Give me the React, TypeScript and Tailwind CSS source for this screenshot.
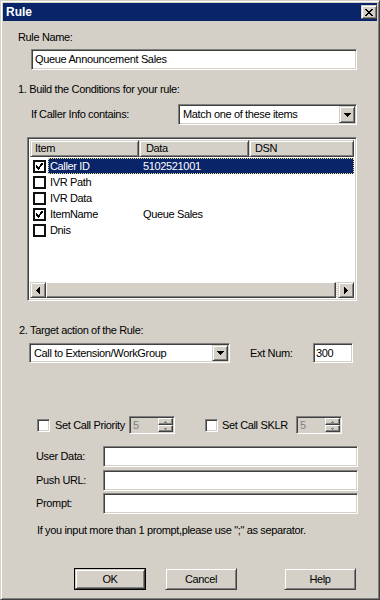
import React from "react";

const sunken =
  "border border-t-[#808080] border-l-[#808080] border-b-white border-r-white shadow-[inset_1px_1px_0_#404040,inset_-1px_-1px_0_#d4d0c8]";
const raised =
  "border border-t-[#d4d0c8] border-l-[#d4d0c8] border-b-[#404040] border-r-[#404040] shadow-[inset_1px_1px_0_#ffffff,inset_-1px_-1px_0_#808080]";
const raisedW =
  "border border-t-white border-l-white border-b-[#404040] border-r-[#404040] shadow-[inset_-1px_-1px_0_#808080]";

function Check() {
  return (
    <svg width="7" height="7" viewBox="0 0 7 7" shapeRendering="crispEdges">
      <path d="M0 2h1v1H0zM0 3h2v1H0zM0 4h3v1H0zM1 5h3v1H1zM2 6h1v1H2zM3 4h1v1H3zM4 3h1v1H4zM4 2h2v1H4zM5 1h1v1H5zM6 0h1v1H6zM5 0h1v1H5zM4 1h1v1H4zM3 3h1v1H3zM6 1h1v1H6zM5 2h1v1H5z" fill="#000" />
    </svg>
  );
}

function CheckBox({ checked, flat }: { checked?: boolean; flat?: boolean }) {
  return (
    <div
      className={`w-[13px] h-[13px] bg-white flex items-center justify-center box-border ${
        flat ? "border-2 border-[#101010]" : sunken
      }`}
    >
      {checked && <Check />}
    </div>
  );
}

function DownArrow() {
  return (
    <svg width="7" height="4" viewBox="0 0 7 4" shapeRendering="crispEdges">
      <path d="M0 0h7v1H0zM1 1h5v1H1zM2 2h3v1H2zM3 3h1v1H3z" fill="#000" />
    </svg>
  );
}

function Combo({ text, w }: { text: string; w: string }) {
  return (
    <div className={`${w} h-full bg-white box-border flex items-stretch p-[1px] ${sunken}`}>
      <div className="flex-1 flex items-center pl-[3px] text-black">{text}</div>
      <div className={`w-[16px] box-border flex items-center justify-center bg-[#d4d0c8] ${raised}`}>
        <DownArrow />
      </div>
    </div>
  );
}

function Spinner() {
  return (
    <div className={`w-[46px] h-[18px] box-border bg-[#d4d0c8] flex items-stretch p-[1px] ${sunken}`}>
      <div className="flex-1 flex items-center pl-[2px] text-[#808080]">5</div>
      <div className="w-[15px] flex flex-col">
        <div className={`flex-1 box-border flex items-center justify-center ${raisedW}`}>
          <svg width="3" height="2" viewBox="0 0 3 2"><path d="M1 0h1v1h1v1H0V1h1z" fill="#808080" /></svg>
        </div>
        <div className={`flex-1 box-border flex items-center justify-center ${raisedW}`}>
          <svg width="3" height="2" viewBox="0 0 3 2"><path d="M0 0h3v1H2v1H1V1H0z" fill="#808080" /></svg>
        </div>
      </div>
    </div>
  );
}

function Field({ label }: { label: string }) {
  return (
    <div className="flex items-center h-[21px]">
      <div className="ml-[33px] w-[67px]">{label}</div>
      <div className={`w-[255px] h-full bg-white box-border ${sunken}`} />
    </div>
  );
}

function Button({ label, def }: { label: string; def?: boolean }) {
  return (
    <div
      className={`w-[72px] h-[22px] box-border flex items-center justify-center ${
        def ? "border border-black p-0" : ""
      }`}
    >
      <div className={`w-full h-full box-border flex items-center justify-center ${raised}`}>{label}</div>
    </div>
  );
}

const rows = [
  { name: "Caller ID", data: "5102521001", checked: true, sel: true },
  { name: "IVR Path", data: "", checked: false },
  { name: "IVR Data", data: "", checked: false },
  { name: "ItemName", data: "Queue Sales", checked: true },
  { name: "Dnis", data: "", checked: false },
];

export default function App() {
  return (
    <div
      className="w-[380px] h-[600px] box-border bg-[#d4d0c8] border border-t-[#d4d0c8] border-l-[#d4d0c8] border-b-[#404040] border-r-[#404040] shadow-[inset_1px_1px_0_#ffffff,inset_-1px_-1px_0_#808080] p-[2px] flex flex-col text-[11px] leading-[13px] tracking-[-0.35px] text-black overflow-hidden"
      style={{ fontFamily: '"Liberation Sans", Arial, sans-serif' }}
    >
      {/* title bar */}
      <div className="h-[18px] bg-[#0a246a] flex items-start justify-between shrink-0">
        <div className="text-white font-bold text-[12px] leading-[18px] pl-[3px] tracking-[0px]">Rule</div>
        <div className={`mt-[2px] mr-[0px] w-[16px] h-[14px] box-border bg-[#d4d0c8] flex items-center justify-center ${raised}`}>
          <svg width="8" height="7" viewBox="0 0 8 7" shapeRendering="crispEdges">
            <path d="M0 0h2v1h1v1h2V1h1V0h2v1H7v1H6v1H5v1h1v1h1v1h1v1H6V6H5V5H3v1H2v1H0V6h1V5h1V4h1V3H2V2H1V1H0z" fill="#000" />
          </svg>
        </div>
      </div>

      {/* Rule name */}
      <div className="mt-[10px] ml-[15px]">Rule Name:</div>
      <div className={`mt-[5px] ml-[28px] w-[326px] h-[21px] bg-white box-border flex items-center pl-[3px] ${sunken}`}>
        Queue Announcement Sales
      </div>

      <div className="mt-[13px] ml-[15px]">1. Build the Conditions for your rule:</div>
      <div className="mt-[8px] h-[21px] flex items-center">
        <div className="ml-[28px] w-[147px]">If Caller Info contains:</div>
        <Combo text="Match one of these items" w="w-[179px]" />
      </div>

      {/* list view */}
      <div className={`mt-[12px] ml-[24px] w-[330px] h-[164px] box-border bg-white p-[2px] flex flex-col ${sunken}`}>
        <div className="h-[17px] flex shrink-0">
          <div className={`w-[109px] box-border bg-[#d4d0c8] pl-[4px] flex items-center ${raised}`}>Item</div>
          <div className={`w-[110px] box-border bg-[#d4d0c8] pl-[6px] flex items-center ${raised}`}>Data</div>
          <div className={`flex-1 box-border bg-[#d4d0c8] pl-[5px] flex items-center ${raised}`}>DSN</div>
        </div>
        <div className="flex-1 pt-[1px]">
          {rows.map((r) => (
            <div key={r.name} className="h-[16px] flex items-center">
              <div className="ml-[3px] mr-[2px]">
                <CheckBox checked={r.checked} flat />
              </div>
              <div
                className={`flex-1 h-full flex items-center box-border ${
                  r.sel ? "bg-[#0a246a] text-white border border-dotted border-[#e8d88a]" : "border border-transparent"
                }`}
              >
                <div className="w-[94px] pl-[1px]">{r.name}</div>
                <div>{r.data}</div>
              </div>
            </div>
          ))}
        </div>
        <div className="h-[16px] flex shrink-0 bg-[#ece9e4]">
          <div className={`w-[16px] box-border bg-[#d4d0c8] flex items-center justify-center ${raised}`}>
            <svg width="4" height="7" viewBox="0 0 4 7" shapeRendering="crispEdges"><path d="M3 0h1v7H3zM2 1h1v5H2zM1 2h1v3H1zM0 3h1v1H0z" fill="#000" /></svg>
          </div>
          <div className={`flex-1 box-border bg-[#d4d0c8] ${raisedW}`} />
          <div className="w-[2px] bg-[repeating-linear-gradient(0deg,#ffffff_0px,#ffffff_1px,#d4d0c8_1px,#d4d0c8_2px)]" />
          <div className={`w-[16px] box-border bg-[#d4d0c8] flex items-center justify-center ${raised}`}>
            <svg width="4" height="7" viewBox="0 0 4 7" shapeRendering="crispEdges"><path d="M0 0h1v7H0zM1 1h1v5H1zM2 2h1v3H2zM3 3h1v1H3z" fill="#000" /></svg>
          </div>
        </div>
      </div>

      <div className="mt-[23px] ml-[16px]">2. Target action of the Rule:</div>
      <div className="mt-[6px] h-[20px] flex items-center">
        <div className="ml-[26px] h-full">
          <Combo text="Call to Extension/WorkGroup" w="w-[201px]" />
        </div>
        <div className="ml-[20px] w-[63px]">Ext Num:</div>
        <div className={`w-[40px] h-full bg-white box-border flex items-center pl-[2px] ${sunken}`}>300</div>
      </div>

      {/* priority row */}
      <div className="mt-[53px] h-[18px] flex items-center">
        <div className="ml-[34px]">
          <CheckBox />
        </div>
        <div className="ml-[5px] w-[74px]">Set Call Priority</div>
        <Spinner />
        <div className="ml-[30px]">
          <CheckBox />
        </div>
        <div className="ml-[4px] w-[74px]">Set Call SKLR</div>
        <Spinner />
      </div>

      <div className="mt-[12px] flex flex-col gap-[2px]">
        <Field label="User Data:" />
        <div className="mt-[1px]">
          <Field label="Push URL:" />
        </div>
        <Field label="Prompt:" />
      </div>

      <div className="mt-[10px] ml-[34px]">If you input more than 1 prompt,please use ";" as separator.</div>

      <div className="mt-[31px] flex">
        <div className="ml-[71px]">
          <Button label="OK" def />
        </div>
        <div className="ml-[19px]">
          <Button label="Cancel" />
        </div>
        <div className="ml-[47px]">
          <Button label="Help" />
        </div>
      </div>
    </div>
  );
}
